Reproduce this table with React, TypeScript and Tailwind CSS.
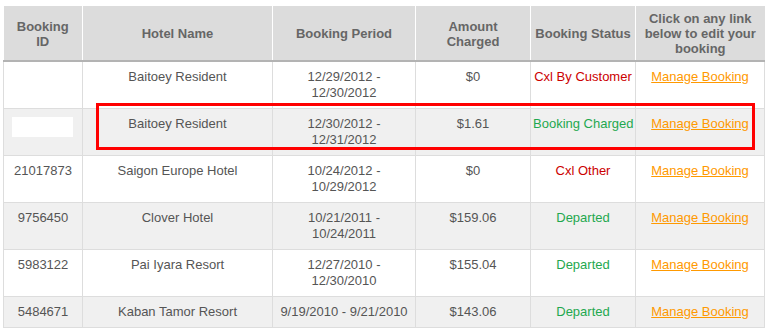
import React from "react";

type Status = "cxl" | "charged" | "departed";

interface Booking {
  id: string;
  hotel: string;
  period: string[];
  amount: string;
  status: string;
  kind: Status;
  redacted?: boolean;
}

const bookings: Booking[] = [
  { id: "", hotel: "Baitoey Resident", period: ["12/29/2012 -", "12/30/2012"], amount: "$0", status: "Cxl By Customer", kind: "cxl" },
  { id: "", hotel: "Baitoey Resident", period: ["12/30/2012 -", "12/31/2012"], amount: "$1.61", status: "Booking Charged", kind: "charged", redacted: true },
  { id: "21017873", hotel: "Saigon Europe Hotel", period: ["10/24/2012 -", "10/29/2012"], amount: "$0", status: "Cxl Other", kind: "cxl" },
  { id: "9756450", hotel: "Clover Hotel", period: ["10/21/2011 -", "10/24/2011"], amount: "$159.06", status: "Departed", kind: "departed" },
  { id: "5983122", hotel: "Pai Iyara Resort", period: ["12/27/2010 -", "12/30/2010"], amount: "$155.04", status: "Departed", kind: "departed" },
  { id: "5484671", hotel: "Kaban Tamor Resort", period: ["9/19/2010 - 9/21/2010"], amount: "$143.06", status: "Departed", kind: "departed" },
];

const statusColor: Record<Status, string> = {
  cxl: "text-[#cc0000]",
  charged: "text-[#1fa84f]",
  departed: "text-[#1fa84f]",
};

const th = "border-r border-white last:border-r-0 px-[2px] pt-[5px] pb-[4px] align-middle font-bold leading-[15px] text-[#666]";
const td = "border border-[#dddddd] px-[2px] pt-[7px] pb-[7px] align-top leading-4 whitespace-nowrap";

export default function App() {
  return (
    <div className="relative bg-white w-[769px] h-[332px] pt-[6px] pl-[3px] font-['Liberation_Sans',Arial,sans-serif] text-[13px] text-[#555]">
      <table className="table-fixed border-collapse w-[761px] text-center">
        <colgroup>
          <col className="w-[79px]" />
          <col className="w-[190px]" />
          <col className="w-[143px]" />
          <col className="w-[115px]" />
          <col className="w-[105px]" />
          <col className="w-[129px]" />
        </colgroup>
        <thead>
          <tr className="bg-[#dcdcdc] border-b-2 border-[#b3b3b3]">
            <th className={th}>Booking<br />ID</th>
            <th className={th}>Hotel Name</th>
            <th className={th}>Booking Period</th>
            <th className={th}>Amount<br />Charged</th>
            <th className={th}>Booking Status</th>
            <th className={th}>Click on any link<br />below to edit your<br />booking</th>
          </tr>
        </thead>
        <tbody>
          {bookings.map((b, i) => (
            <tr key={i} className={i % 2 === 1 ? "bg-[#f0f0f0]" : "bg-white"}>
              <td className={td}>
                {b.redacted ? (
                  <span className="inline-block w-[61px] h-[20px] bg-white align-top mt-[1px] -ml-[2px]" />
                ) : (
                  b.id
                )}
              </td>
              <td className={td}>{b.hotel}</td>
              <td className={td}>
                {b.period.map((line, j) => (
                  <div key={j}>{line}</div>
                ))}
              </td>
              <td className={td}>{b.amount}</td>
              <td className={`${td} ${statusColor[b.kind]}`}>{b.status}</td>
              <td className={td}>
                <a href="#" className="text-[#ff9900] underline">Manage Booking</a>
              </td>
            </tr>
          ))}
        </tbody>
      </table>

      {/* highlight annotation over the second row */}
      <div className="absolute left-[96px] top-[103px] w-[659px] h-[47px] border-[3px] border-[#ff0000] pointer-events-none" />
    </div>
  );
}
